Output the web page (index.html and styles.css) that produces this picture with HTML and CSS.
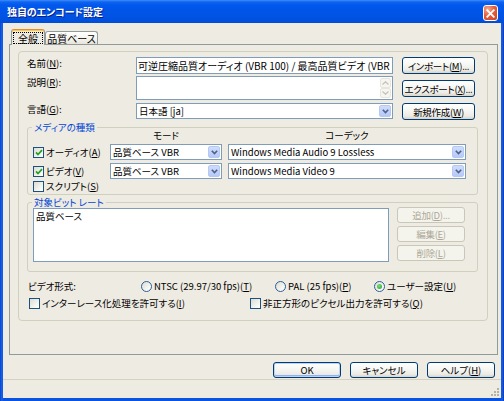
FILE: index.html
```html
<!DOCTYPE html>
<html lang="ja">
<head>
<meta charset="utf-8">
<title>独自のエンコード設定</title>
<link rel="stylesheet" href="styles.css">
</head>
<body>
<div class="window">
  <div class="titlebar">
    <span class="title">独自のエンコード設定</span>
    <span class="close"><svg width="9" height="9" viewBox="0 0 9 9"><path d="M1.2 1.2L7.8 7.8M7.8 1.2L1.2 7.8" stroke="#fff" stroke-width="1.8" stroke-linecap="square"/></svg></span>
  </div>
  <div class="client">
    <div class="tabs">
      <div class="tab active"><span class="focus">全般</span></div>
      <div class="tab">品質ベース</div>
    </div>
    <div class="page">
      <div class="frame">
        <div class="toprows">
          <div class="row r1">
            <span class="lbl">名前(<u>N</u>):</span>
            <div class="field"><span class="val">可逆圧縮品質オーディオ (VBR 100) / 最高品質ビデオ (VBR 100)</span></div>
            <button class="btn">インポート(<u>M</u>)...</button>
          </div>
          <div class="row r2">
            <span class="lbl">説明(<u>R</u>):</span>
            <div class="field memo">
              <span class="val"></span>
              <span class="vscroll">
                <span class="sarrow"><svg width="7" height="4" viewBox="0 0 7 4"><path d="M0.5 3.5L3.5 0.8L6.5 3.5" fill="none" stroke="#C3C1B5" stroke-width="1.2"/></svg></span>
                <span class="sarrow"><svg width="7" height="4" viewBox="0 0 7 4"><path d="M0.5 0.5L3.5 3.2L6.5 0.5" fill="none" stroke="#C3C1B5" stroke-width="1.2"/></svg></span>
              </span>
            </div>
            <button class="btn">エクスポート(<u>X</u>)...</button>
          </div>
          <div class="row r3">
            <span class="lbl">言語(<u>G</u>):</span>
            <div class="field combo">
              <span class="val">日本語 [ja]</span>
              <span class="dd"><svg width="7" height="5" viewBox="0 0 7 5"><path d="M0.8 0.8L3.5 3.6L6.2 0.8" fill="none" stroke="#4D6185" stroke-width="1.6"/></svg></span>
            </div>
            <button class="btn">新規作成(<u>W</u>)</button>
          </div>
        </div>

        <fieldset class="group media">
          <legend>メディアの種類</legend>
          <div class="mhead">
            <span class="hsp"></span>
            <span class="hmode">モード</span>
            <span class="hcodec">コーデック</span>
          </div>
          <div class="mrow m1">
            <span class="mcheck"><span class="cb"><svg width="8" height="7" viewBox="0 0 8 7"><path d="M1 3.4L3 5.5L7 1.2" fill="none" stroke="#21A121" stroke-width="1.7"/></svg></span><span class="ctext">オーディオ(<u>A</u>)</span></span>
            <div class="field combo mode">
              <span class="val">品質ベース VBR</span>
              <span class="dd"><svg width="7" height="5" viewBox="0 0 7 5"><path d="M0.8 0.8L3.5 3.6L6.2 0.8" fill="none" stroke="#4D6185" stroke-width="1.6"/></svg></span>
            </div>
            <div class="field combo codec">
              <span class="val">Windows Media Audio 9 Lossless</span>
              <span class="dd"><svg width="7" height="5" viewBox="0 0 7 5"><path d="M0.8 0.8L3.5 3.6L6.2 0.8" fill="none" stroke="#4D6185" stroke-width="1.6"/></svg></span>
            </div>
          </div>
          <div class="mrow m2">
            <span class="mcheck"><span class="cb"><svg width="8" height="7" viewBox="0 0 8 7"><path d="M1 3.4L3 5.5L7 1.2" fill="none" stroke="#21A121" stroke-width="1.7"/></svg></span><span class="ctext">ビデオ(<u>V</u>)</span></span>
            <div class="field combo mode">
              <span class="val">品質ベース VBR</span>
              <span class="dd"><svg width="7" height="5" viewBox="0 0 7 5"><path d="M0.8 0.8L3.5 3.6L6.2 0.8" fill="none" stroke="#4D6185" stroke-width="1.6"/></svg></span>
            </div>
            <div class="field combo codec">
              <span class="val">Windows Media Video 9</span>
              <span class="dd"><svg width="7" height="5" viewBox="0 0 7 5"><path d="M0.8 0.8L3.5 3.6L6.2 0.8" fill="none" stroke="#4D6185" stroke-width="1.6"/></svg></span>
            </div>
          </div>
          <div class="mrow m3">
            <span class="mcheck"><span class="cb"></span><span class="ctext">スクリプト(<u>S</u>)</span></span>
          </div>
        </fieldset>

        <fieldset class="group bitrate">
          <legend>対象ビット レート</legend>
          <div class="brow">
            <div class="listbox"><div class="item">品質ベース</div></div>
            <div class="bbtns">
              <button class="btn dis">追加(<u>D</u>)...</button>
              <button class="btn dis">編集(<u>E</u>)</button>
              <button class="btn dis">削除(<u>L</u>)</button>
            </div>
          </div>
        </fieldset>

        <div class="vrow">
          <span class="vlbl">ビデオ形式:</span>
          <span class="ropt ntsc"><span class="rb"></span><span class="rtext">NTSC (29.97/30 fps)(<u>T</u>)</span></span>
          <span class="ropt pal"><span class="rb"></span><span class="rtext">PAL (25 fps)(<u>P</u>)</span></span>
          <span class="ropt user"><span class="rb on"><span class="dot"></span></span><span class="rtext">ユーザー設定(<u>U</u>)</span></span>
        </div>
        <div class="crow">
          <span class="copt first"><span class="cb"></span><span class="ctext">インターレース化処理を許可する(<u>I</u>)</span></span>
          <span class="copt"><span class="cb"></span><span class="ctext">非正方形のピクセル出力を許可する(<u>Q</u>)</span></span>
        </div>
      </div>
    </div>
    <div class="footer">
      <button class="btn big def">OK</button>
      <button class="btn big">キャンセル</button>
      <button class="btn big">ヘルプ(<u>H</u>)</button>
    </div>
    <div class="status">
      <svg class="grip" width="11" height="11" viewBox="0 0 11 11">
        <g fill="#B5B2A3">
          <rect x="8" y="2" width="2" height="2"/>
          <rect x="5" y="5" width="2" height="2"/><rect x="8" y="5" width="2" height="2"/>
          <rect x="2" y="8" width="2" height="2"/><rect x="5" y="8" width="2" height="2"/><rect x="8" y="8" width="2" height="2"/>
        </g>
      </svg>
    </div>
  </div>
</div>
</body>
</html>
```
FILE: styles.css
```css
* { box-sizing: border-box; }
html, body { margin: 0; padding: 0; }
body {
  width: 504px;
  height: 401px;
  overflow: hidden;
  font-family: "Noto Sans CJK JP", "Liberation Sans", sans-serif;
  font-size: 9.5px;
  line-height: 12px;
  color: #000;
  font-feature-settings: "palt";
}
u { text-decoration: underline; text-underline-offset: 1px; }

.window {
  width: 504px;
  height: 401px;
  background: linear-gradient(90deg, #0842C9 0, #1A66EE 2px, #0A53E0 3px, #0A53E0 501px, #1A60E6 502px, #0638B8 504px);
  display: flex;
  flex-direction: column;
}

/* title bar */
.titlebar {
  height: 23px;
  flex: none;
  display: flex;
  justify-content: space-between;
  align-items: center;
  padding: 0 6px 0 7px;
  background: linear-gradient(#3D8DF7 0, #0F63F0 2px, #0058EE 5px, #0055E8 45%, #0052E1 80%, #004CD7 100%);
}
.title {
  color: #fff;
  font-weight: bold;
  font-size: 10px;
  letter-spacing: -0.1px;
  text-shadow: 1px 1px 0 #0A1E8A;
}
.close {
  width: 15px;
  height: 16px;
  margin-top: 3px;
  border: 1px solid #fff;
  border-radius: 3px;
  background: radial-gradient(circle at 30% 25%, #F6AB93 0, #E5603E 45%, #CC4220 100%);
  display: flex;
  align-items: center;
  justify-content: center;
}

/* client */
.client {
  margin: 0 3px;
  height: 375px;
  flex: none;
  background: #EEEBE2;
  display: flex;
  flex-direction: column;
}

/* tabs */
.tabs {
  height: 21px;
  flex: none;
  padding: 6px 0 0 8px;
  display: flex;
  align-items: flex-end;
}
.tab {
  height: 13px;
  width: 53px;
  border: 1px solid #919B9C;
  border-bottom: 0;
  border-radius: 3px 3px 0 0;
  background: linear-gradient(#FFFFFF, #F3F2EC 60%, #E6E4DA);
  display: flex;
  align-items: center;
  justify-content: center;
  white-space: nowrap;
  line-height: 11px;
  font-size: 10px;
}
.tab.active {
  width: 34px;
  height: 16px;
  margin-bottom: -1px;
  position: relative;
  z-index: 1;
  background: #EEEBE2;
  border-top: 1px solid #E68B2C;
  box-shadow: inset 0 1px 0 #FFC83C;
  padding-top: 1px;
}
.focus {
  width: 30px;
  height: 12px;
  border: 1px dotted #000;
  display: flex;
  align-items: center;
  justify-content: center;
}

/* page */
.page {
  margin-left: 6px;
  width: 489px;
  height: 311px;
  flex: none;
  border: 1px solid #919B9C;
  background: #EEEBE2;
}
.frame {
  margin: 6px 0 0 8px;
  width: 470px;
  height: 270px;
  border: 1px solid #D0D0BF;
  border-radius: 4px;
}

/* top rows */
.toprows { margin-top: 5px; padding-left: 8px; }
.row { display: flex; align-items: flex-start; }
.lbl { width: 109px; flex: none; white-space: nowrap; }
.field {
  width: 257px;
  height: 17px;
  flex: none;
  border: 1px solid #7F9DB9;
  background: #fff;
  display: flex;
  align-items: center;
  overflow: hidden;
}
.val {
  flex: 1;
  padding-left: 1px;
  white-space: nowrap;
  overflow: hidden;
  line-height: 13px;
}
.r1 .val { font-size: 10px; }
.r2 { margin-top: 2px; }
.r2 .field { height: 24px; align-items: stretch; }
.r2 .btn { margin-top: 4px; }
.r3 { margin-top: 3px; }
.r3 .field { height: 16px; }

.vscroll {
  width: 12px;
  flex: none;
  display: flex;
  flex-direction: column;
  padding: 1px 1px 1px 0;
}
.sarrow {
  flex: 1;
  border: 1px solid #E8E6DC;
  border-radius: 2px;
  background: #F6F5EF;
  display: flex;
  align-items: center;
  justify-content: center;
}

.combo { padding: 1px; }
.dd {
  width: 12px;
  height: 100%;
  flex: none;
  border: 1px solid #B7C8F2;
  border-radius: 2px;
  background: linear-gradient(#CFDCFC, #B6C9F7);
  display: flex;
  align-items: center;
  justify-content: center;
}

/* buttons */
.btn {
  appearance: none;
  font: inherit;
  font-feature-settings: "palt";
  letter-spacing: -0.3px;
  color: #000;
  margin: 0;
  padding: 0;
  width: 73px;
  height: 17px;
  flex: none;
  margin-left: 9px;
  border: 1px solid #003C74;
  border-radius: 3px;
  background: linear-gradient(#FFFFFF 0, #F6F6F2 45%, #ECEBE6 80%, #D9D4C9 100%);
  display: flex;
  align-items: center;
  justify-content: center;
  white-space: nowrap;
  line-height: 12px;
}
.btn.dis {
  color: #ACA899;
  border-color: #C9C7BA;
  background: #F5F4EC;
  width: 68px;
  height: 16px;
  margin-left: 0;
}
.btn.big { width: 68px; height: 16px; margin-left: 0; letter-spacing: 0; }
.btn.def { box-shadow: inset 0 0 0 1px #BCD1F5, inset 0 -1px 0 1px #92B0EC; }

/* group boxes */
fieldset.group {
  margin: 1px 0 0 8px;
  width: 451px;
  min-width: 0;
  border: 1px solid #D0D0BF;
  border-radius: 3px;
  padding: 0 0 0 4px;
}
legend {
  padding: 0 2px;
  margin: 0;
  color: #0046D5;
  line-height: 12px;
}
.media { height: 74px; }
.mhead { display: flex; margin-top: -4px; height: 12px; }
.hsp { width: 78px; flex: none; }
.hmode { width: 112px; text-align: center; flex: none; }
.hcodec { width: 238px; margin-left: 6px; text-align: center; flex: none; }
.mrow { display: flex; align-items: center; height: 16px; margin-top: 3px; }
.mrow.m3 { margin-top: 1px; height: 12px; }
.mcheck { width: 78px; flex: none; display: flex; align-items: center; padding-left: 1px; white-space: nowrap; }
.field.mode { width: 112px; height: 16px; }
.field.codec { width: 238px; height: 16px; margin-left: 6px; }

.cb {
  width: 11px;
  height: 11px;
  flex: none;
  border: 1px solid #1C5180;
  background: linear-gradient(135deg, #DCDCD5 0, #F2F2EE 60%, #FFFFFF 100%);
  display: flex;
  align-items: center;
  justify-content: center;
}
.ctext { margin-left: 2px; white-space: nowrap; }

.bitrate { margin-top: 5px; height: 76px; padding-top: 3px; }
.brow { display: flex; align-items: flex-start; padding-left: 1px; }
.listbox {
  width: 356px;
  height: 54px;
  flex: none;
  border: 1px solid #7F9DB9;
  background: #fff;
  padding: 1px 0 0 2px;
}
.bbtns {
  margin-left: 8px;
  margin-top: -1px;
  display: flex;
  flex-direction: column;
  gap: 3px;
}

/* video format */
.vrow { margin: 7px 0 0 9px; display: flex; align-items: center; height: 14px; white-space: nowrap; }
.vlbl { width: 113px; flex: none; }
.ropt { display: flex; align-items: center; flex: none; }
.ntsc { width: 134px; }
.pal { width: 99px; }
.rb {
  width: 11px;
  height: 11px;
  flex: none;
  border-radius: 50%;
  border: 1px solid #2C5D98;
  background: linear-gradient(135deg, #DCDCD5 0, #F4F4F0 60%, #FFFFFF 100%);
  display: flex;
  align-items: center;
  justify-content: center;
}
.dot {
  width: 5px;
  height: 5px;
  border-radius: 50%;
  background: radial-gradient(circle at 40% 35%, #7EDB7E, #21A121);
}
.rtext { margin-left: 2px; }

.crow { margin: 3px 0 0 10px; display: flex; align-items: center; height: 14px; }
.copt { display: flex; align-items: center; flex: none; }
.copt.first { width: 221px; }

/* footer */
.footer {
  margin-top: 7px;
  height: 16px;
  flex: none;
  display: flex;
  justify-content: flex-end;
  gap: 9px;
  padding-right: 6px;
}
.status {
  margin-top: 1px;
  height: 19px;
  flex: none;
  border-top: 1px solid #D6D2C2;
  display: flex;
  justify-content: flex-end;
  align-items: flex-end;
  padding: 0 1px 1px 0;
}
```
